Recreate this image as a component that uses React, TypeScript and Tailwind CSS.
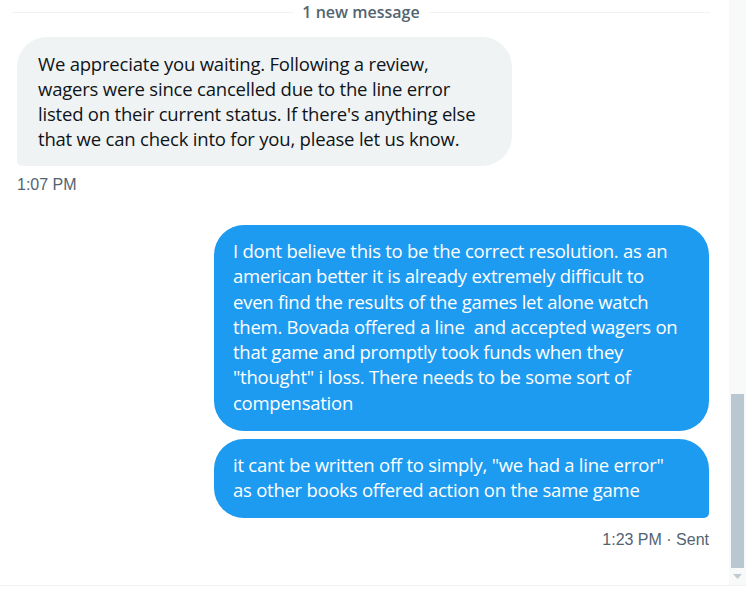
import React from "react";

// Chat thread: one received message, two sent messages, a thin fake scrollbar.

const font = { fontFamily: '"Open Sans", "Noto Sans", sans-serif' };
const meta = { fontFamily: '"Liberation Sans", Arial, sans-serif' };

function Lines({ lines }: { lines: string[] }) {
  return (
    <>
      {lines.map((l, i) => (
        <span key={i} className="block whitespace-pre">
          {l}
        </span>
      ))}
    </>
  );
}

export default function App() {
  return (
    <div className="h-[590px] w-[746px] overflow-hidden bg-white" style={font}>
      <div className="flex h-[586px] border-b border-[#eff3f4]">
        <div className="flex flex-1 flex-col">
          {/* divider */}
          <div className="mt-[1px] flex items-center gap-[9px] pl-[12px] pr-[19px]">
            <div className="h-px flex-1 bg-[#eff3f4]" />
            <span className="text-[16px] leading-[22px] font-semibold text-[#536471]">
              1 new message
            </span>
            <div className="h-px flex-1 bg-[#eff3f4]" />
          </div>

          {/* received */}
          <div className="mt-[14px] flex flex-col items-start pl-[17px]">
            <div className="w-[495px] rounded-[30px] rounded-bl-[5px] bg-[#eff3f4] px-[21px] pt-[14px] pb-[15px] text-[18.5px] leading-[25px] tracking-[-0.2px] text-[#0f1419]">
              <Lines
                lines={[
                  "We appreciate you waiting. Following a review,",
                  "wagers were since cancelled due to the line error",
                  "listed on their current status. If there's anything else",
                  "that we can check into for you, please let us know.",
                ]}
              />
            </div>
            <span className="mt-[9px] text-[16px] leading-[20px] text-[#536471]" style={meta}>
              1:07 PM
            </span>
          </div>

          {/* sent */}
          <div className="mt-[30px] flex flex-col items-end gap-[8px] pr-[20px]">
            <div className="w-[495px] rounded-[30px] bg-[#1d9bf0] px-[19px] pt-[13px] pb-[16px] text-[18.5px] leading-[25.3px] tracking-[-0.25px] text-white">
              <Lines
                lines={[
                  "I dont believe this to be the correct resolution. as an",
                  "american better it is already extremely difficult to",
                  "even find the results of the games let alone watch",
                  "them. Bovada offered a line  and accepted wagers on",
                  "that game and promptly took funds when they",
                  "\"thought\" i loss. There needs to be some sort of",
                  "compensation",
                ]}
              />
            </div>
            <div className="w-[495px] rounded-[30px] rounded-br-[5px] bg-[#1d9bf0] px-[19px] pt-[13px] pb-[16px] text-[18.5px] leading-[25px] tracking-[-0.25px] text-white">
              <Lines
                lines={[
                  "it cant be written off to simply, \"we had a line error\"",
                  "as other books offered action on the same game",
                ]}
              />
            </div>
            <span className="mt-[4px] text-[16px] leading-[20px] text-[#536471]" style={meta}>
              1:23 PM · Sent
            </span>
          </div>
        </div>

        {/* scrollbar */}
        <div className="flex w-[17px] flex-col bg-[#f8f9f9]">
          <div className="flex-1" />
          <div className="mx-[2px] h-[174px] bg-[#b9c8d0]" />
          <div className="flex h-[17px] items-center justify-center">
            <svg width="9" height="5" viewBox="0 0 9 5">
              <path d="M0 0h9L4.5 5z" fill="#c2cbd1" />
            </svg>
          </div>
        </div>
      </div>
    </div>
  );
}
